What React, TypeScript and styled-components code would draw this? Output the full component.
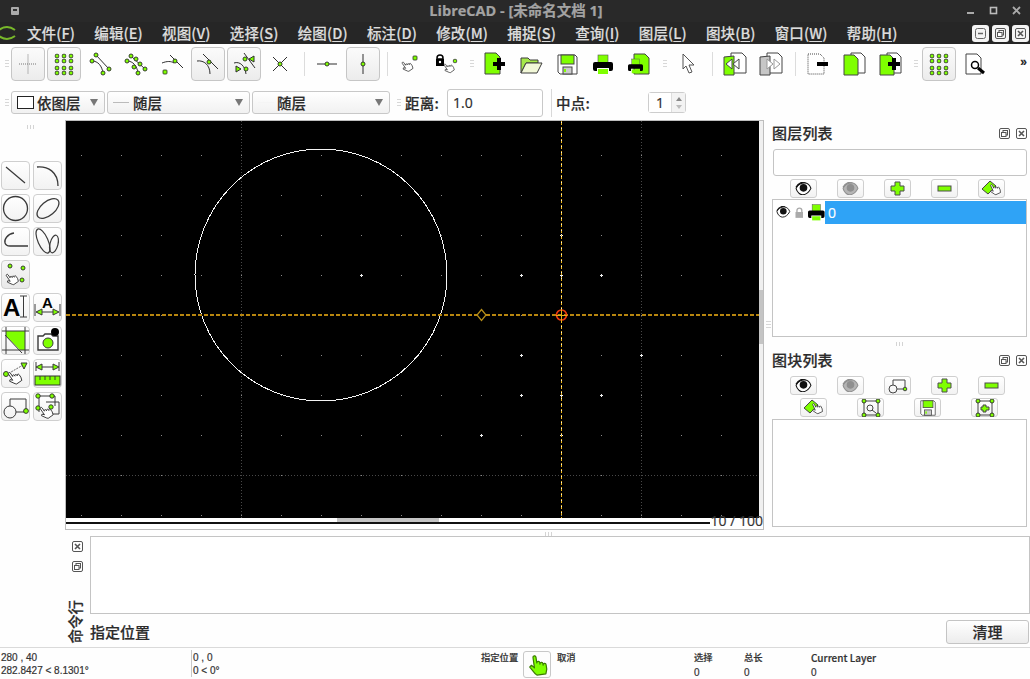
import React from "react";
import styled, { createGlobalStyle } from "styled-components";

const G = "#7fff00";
const D = "#2f2f2f";

const Global = createGlobalStyle`
  html, body { margin: 0; padding: 0; background: #fefefe; }
  body { width: 1030px; height: 679px; overflow: hidden; font-family: "Noto Sans CJK SC", "Open Sans", sans-serif; color: #2b2b2b; -webkit-text-stroke: 0.2px currentColor; }
`;

const Window = styled.div`
  width: 1030px; height: 679px; display: flex; flex-direction: column; background: #fefefe; overflow: hidden;
`;
const TitleBar = styled.div`
  height: 22px; flex: none; background: #292929; display: flex; align-items: center; justify-content: space-between; padding: 0 6px 0 10px;
`;
const TitleText = styled.div`
  font: 700 14.5px "Open Sans", "Noto Sans CJK SC", sans-serif; color: #a3a3a3; line-height: 20px; margin-left: 48px;
`;
const WinCtrls = styled.div`display: flex; gap: 9px;`;
const MenuBar = styled.div`
  height: 22px; flex: none; background: #262626; display: flex; align-items: center; padding-right: 1px;
`;
const MenuItems = styled.div`display: flex; gap: 19.25px; margin-left: 11px; flex: 1;`;
const MenuItem = styled.span`
  font: 500 14.5px/20px "Noto Sans CJK SC", sans-serif; color: #dcdcdc; letter-spacing: 0.1px;
  u { text-underline-offset: 2px; text-decoration-thickness: 1px; }
`;
const MdiBtn = styled.div`
  width: 17px; height: 17px; margin-left: 3px; background: #f4f4f4; border-radius: 3px; display: flex; align-items: center; justify-content: center;
`;

const ToolRow = styled.div`
  height: 40px; flex: none; padding: 3px 0 0 3px; box-sizing: border-box; display: flex; align-items: flex-start; background: #fefefe;
`;
const GripV = styled.div<{ $w?: number }>`
  flex: none; width: ${(p) => p.$w ?? 13}px; height: 34px; display: flex; justify-content: center; align-items: center;
  &::after { content: ""; width: 4px; height: 8px; background: repeating-linear-gradient(#d8d8d8 0 1px, transparent 1px 3px); }
`;
const Btn = styled.div<{ $on?: boolean }>`
  flex: none; width: 34px; height: 34px; margin-right: 2px; box-sizing: border-box; border-radius: 4px; display: flex; align-items: center; justify-content: center;
  border: 1px solid ${(p) => (p.$on ? "#c6c6c6" : "transparent")};
  background: ${(p) => (p.$on ? "linear-gradient(#fbfbfb, #ececec)" : "transparent")};
`;
const Sep = styled.div`
  flex: none; width: 11px; height: 24px; margin-top: 5px; display: flex; justify-content: center;
  &::after { content: ""; width: 1px; background: #dcdcdc; }
`;
const More = styled.div`
  margin-left: auto; margin-right: 3px; margin-top: 8px; font: 700 12px "Liberation Sans", sans-serif; color: #222;
`;
const PropRow = styled.div`
  height: 37px; flex: none; padding: 0 0 0 3px; box-sizing: border-box; display: flex; align-items: center;
`;
const Combo = styled.div<{ $w: number; $pad: number }>`
  flex: none; width: ${(p) => p.$w}px; height: 23px; box-sizing: border-box; margin-right: 2px; border: 1px solid #c8c8c8; border-radius: 3px;
  background: linear-gradient(#fff, #f1f1f1); display: flex; align-items: center; padding: 0 6px 0 ${(p) => p.$pad}px;
  font: 500 14.5px/20px "Noto Sans CJK SC", sans-serif;
`;
const Swatch = styled.span`width: 15px; height: 11px; border: 1px solid #222; background: #fff; margin-right: 3px; flex: none;`;
const DashMark = styled.span<{ $w: number; $c: string; $gap: number }>`
  width: ${(p) => p.$w}px; height: 1px; background: ${(p) => p.$c}; margin-right: ${(p) => p.$gap}px; flex: none;
`;
const Caret = styled.span`
  margin-left: auto; width: 0; height: 0; border-left: 4px solid transparent; border-right: 4px solid transparent; border-top: 7px solid #777;
`;
const PropLabel = styled.span<{ $w: number }>`
  flex: none; width: ${(p) => p.$w}px; font: 500 14.5px/20px "Noto Sans CJK SC", sans-serif; letter-spacing: 0.2px;
`;
const NumInput = styled.div`
  flex: none; width: 96px; height: 28px; box-sizing: border-box; border: 1px solid #c8c8c8; border-radius: 3px; padding-left: 5px;
  font: 500 14px/26px "Open Sans", sans-serif; background: #fff;
`;
const VSep = styled.div`flex: none; width: 1px; height: 28px; background: #d8d8d8; margin: 0 4px 0 8px;`;
const Spin = styled.div`
  flex: none; width: 38px; height: 21px; box-sizing: border-box; border: 1px solid #cdcdcd; border-radius: 3px; margin-left: 0; display: flex;
  font: 500 14px/19px "Open Sans", sans-serif;
`;
const SpinVal = styled.span`flex: 1; text-align: center; background: #fff;`;
const SpinArrows = styled.span`
  width: 13px; display: flex; flex-direction: column; align-items: center; justify-content: center; gap: 4px; background: #f3f3f3; border-left: 1px solid #ddd;
`;
const Tri = styled.span<{ $up?: boolean; $c: string }>`
  width: 0; height: 0; border-left: 3px solid transparent; border-right: 3px solid transparent;
  ${(p) => (p.$up ? `border-bottom: 4px solid ${p.$c};` : `border-top: 4px solid ${p.$c};`)}
`;

const Main = styled.div`flex: none; height: 411px; display: flex; margin-top: -1px;`;
const Palette = styled.div`
  flex: none; width: 65px; box-sizing: border-box; padding: 5px 0 0 1px; display: flex; flex-direction: column; align-items: flex-start;
`;
const GripH = styled.div<{ $m?: string }>`
  width: 8px; height: 4px; margin: ${(p) => p.$m ?? "0"};
  background: repeating-linear-gradient(90deg, #d4d4d4 0 1px, transparent 1px 3px);
`;
const PalGrid = styled.div`
  display: grid; grid-template-columns: 29px 29px; grid-auto-rows: 29px; column-gap: 3px; row-gap: 4px; margin-top: 32px;
`;
const PalBtn = styled.div<{ $active?: boolean }>`
  box-sizing: border-box; border: 1px solid #cfcfcf; border-radius: 4px; display: flex; align-items: center; justify-content: center;
  background: ${(p) => (p.$active ? "linear-gradient(#f7f7f7, #e9e9e9)" : "linear-gradient(#fff, #f2f2f2)")};
`;
const CanvasFrame = styled.div`
  flex: none; width: 699px; height: 410px; box-sizing: border-box; border: 1px solid #bdbdbd; display: grid;
  grid-template-columns: 693px 4px; grid-template-rows: 397px 11px; position: relative;
`;
const VScroll = styled.div`
  background: #f0f0f0; display: flex; flex-direction: column; padding-top: 169px;
`;
const VThumb = styled.div`height: 54px; background: #c4c4c4;`;
const HScroll = styled.div`
  grid-column: 1 / span 2; display: flex; flex-direction: column; background: #fff;
`;
const HTrack = styled.div`
  height: 4px; width: 644px; background: #fff; display: flex; padding-left: 271px; box-sizing: border-box;
`;
const HThumb = styled.div`width: 102px; height: 4px; background: #c4c4c4;`;
const HBlack = styled.div`height: 2px; width: 644px; background: #111;`;
const Counter = styled.div`
  position: absolute; right: 0; bottom: 0; font: 500 14px/16px "Open Sans", sans-serif; color: #333;
`;
const SideGrip = styled.div`
  flex: none; width: 8px; display: flex; align-items: center; padding-left: 2px; box-sizing: border-box; height: 410px; padding-top: 0;
  &::after { content: ""; width: 5px; height: 8px; background: repeating-linear-gradient(#d8d8d8 0 1px, transparent 1px 3px); }
`;
const Side = styled.div`flex: none; width: 258px; display: flex; flex-direction: column;`;
const DockHead = styled.div<{ $h: number }>`
  display: flex; align-items: center; height: ${(p) => p.$h}px; padding-right: 3px; flex: none;
`;
const DockTitle = styled.span`flex: 1; font: 500 15px/20px "Noto Sans CJK SC", sans-serif; letter-spacing: 0.2px;`;
const DockIcons = styled.div`display: flex; gap: 6px;`;
const Filter = styled.div`
  width: 254px; height: 27px; box-sizing: border-box; margin: 3px 0 0 1px; border: 1px solid #c4c4c4; border-radius: 3px; background: #fff; flex: none;
`;
const BtnRow = styled.div<{ $gap: number; $pad: number; $top: number }>`
  display: flex; flex: none; gap: ${(p) => p.$gap}px; padding-left: ${(p) => p.$pad}px; margin-top: ${(p) => p.$top}px;
`;
const SmallBtn = styled.div`
  flex: none; width: 27px; height: 19px; box-sizing: border-box; border: 1px solid #cfcfcf; border-radius: 3px; display: flex; align-items: center; justify-content: center;
  background: linear-gradient(#fff, #f2f2f2);
`;
const LayerList = styled.div`
  width: 255px; height: 138px; flex: none; margin-top: 1px; box-sizing: border-box; border: 1px solid #c4c4c4; background: #fff;
`;
const LayerRow = styled.div`display: flex; align-items: center; height: 24px;`;
const LayerIcons = styled.div`flex: none; width: 52px; height: 24px; display: flex; align-items: center; gap: 4px; padding-left: 3px; box-sizing: border-box;`;
const LayerName = styled.div`
  flex: 1; height: 23px; background: #2fa3f6; color: #fff; font: 500 14px/23px "Open Sans", sans-serif; padding-left: 3px;
`;
const BlockList = styled.div`width: 255px; height: 108px; flex: none; margin-top: 2px; box-sizing: border-box; border: 1px solid #c4c4c4; background: #fff;`;
const DockGripWrap = styled.div`height: 14px; flex: none; display: flex; justify-content: center; align-items: center; padding-right: 3px;`;

const CmdGrip = styled.div`flex: none; height: 5px; display: flex; justify-content: center; padding-left: 68px; align-items: center;`;
const CmdDock = styled.div`flex: none; height: 111px; display: flex;`;
const CmdSide = styled.div`
  flex: none; width: 90px; box-sizing: border-box; padding: 5px 0 4px 72px; display: flex; flex-direction: column; align-items: flex-start; gap: 9px;
`;
const CmdTitle = styled.div`
  margin-top: auto; margin-left: -6px; writing-mode: vertical-rl; text-orientation: sideways; transform: rotate(180deg); font: 500 14.5px/18px "Noto Sans CJK SC", sans-serif;
`;
const CmdBody = styled.div`flex: 1; display: flex; flex-direction: column;`;
const History = styled.div`height: 78px; box-sizing: border-box; border: 1px solid #c4c4c4; background: #fff;`;
const CmdLine = styled.div`flex: 1; display: flex; align-items: center; justify-content: space-between; padding-right: 1px;`;
const Prompt = styled.span`font: 500 15px/20px "Noto Sans CJK SC", sans-serif; margin-top: 2px;`;
const Clear = styled.div`
  width: 83px; height: 24px; box-sizing: border-box; border: 1px solid #c4c4c4; border-radius: 3px; text-align: center; margin-top: 3px;
  background: linear-gradient(#fff, #ececec); font: 500 15px/22px "Noto Sans CJK SC", sans-serif;
`;

const Status = styled.div`
  flex: none; height: 32px; box-sizing: border-box; border-top: 1px solid #dadada; display: flex;
  font: 400 10px/13px "Liberation Sans", "Noto Sans CJK SC", sans-serif; color: #333; white-space: nowrap;
`;
const StatCol = styled.div<{ $w: number; $pad?: number; $bar?: boolean }>`
  flex: none; width: ${(p) => p.$w}px; box-sizing: border-box; padding: 3px 0 0 ${(p) => p.$pad ?? 0}px;
  display: flex; flex-direction: column;
  ${(p) => (p.$bar ? "border-left: 1px solid #c8c8c8; margin: 2px 0; padding-top: 1px;" : "")}
`;
const StatStrong = styled.span<{ $size?: number }>`
  font: 500 ${(p) => p.$size ?? 9.3}px/13px "Noto Sans CJK SC", sans-serif; margin-bottom: 2px;
`;
const MouseBtn = styled.div`
  flex: none; width: 28px; height: 27px; box-sizing: border-box; margin: 3px 6px 0 5px; border: 1px solid #c8c8c8; border-radius: 3px; display: flex; align-items: center; justify-content: center; background: #fdfdfd;
`;

type P = { children?: React.ReactNode; size?: number };
const Svg = ({ children, size = 24 }: P) => (
  <svg width={size} height={size} viewBox={`0 0 ${size} ${size}`} fill="none" stroke={D} strokeWidth={1}>{children}</svg>
);
const N = ({ x, y, r = 2 }: { x: number; y: number; r?: number }) => <circle cx={x} cy={y} r={r} fill={G} stroke="#2a2a2a" strokeWidth={0.9} />;
const Sq = ({ x, y, r = 2 }: { x: number; y: number; r?: number }) => <rect x={x - r} y={y - r} width={r * 2} height={r * 2} rx={0.8} fill={G} stroke="#2a2a2a" strokeWidth={0.8} />;
const Hand = ({ x, y, s = 1, fill = "#fff", rot = -35, line = "#2a2a2a" }: { x: number; y: number; s?: number; fill?: string; rot?: number; line?: string }) => (
  <g transform={`translate(${x} ${y}) scale(${s}) rotate(${rot} 6 7)`}>
    <path d="M4 13 L1 8 L2.3 7 L4 9 V2 a1 1 0 0 1 2 0 V6 a1 1 0 0 1 2 0 V7 a1 1 0 0 1 2 0 V8 a1 1 0 0 1 2 0 V11 L11 14 H5 Z" fill={fill} stroke={line} strokeWidth={0.8} strokeLinejoin="round" />
  </g>
);
const Doc = ({ x, y, w = 15, h = 20, fill = G, dash }: { x: number; y: number; w?: number; h?: number; fill?: string; dash?: boolean }) => (
  <path d={`M${x} ${y}h${w - 4}l4 4v${h - 4}h${-w}z`} fill={fill} stroke="#444" strokeDasharray={dash ? "1 1" : undefined} />
);
const Printer = ({ x, y, s = 1 }: { x: number; y: number; s?: number }) => (
  <g transform={`translate(${x} ${y}) scale(${s})`}>
    <rect x="5" y="0" width="10" height="8" fill={G} stroke="#555" strokeWidth={0.6} />
    <rect x="5" y="14" width="10" height="5" fill={G} stroke="none" />
    <path d="M2 7h16a2 2 0 0 1 2 2v5a2 2 0 0 1-2 2h-2v-3H4v3H2a2 2 0 0 1-2-2V9a2 2 0 0 1 2-2z" fill="#000" stroke="none" />
  </g>
);
const Eye = ({ grey, w = 15 }: { grey?: boolean; w?: number }) => {
  const c = grey ? "#8f8f8f" : "#111";
  return (
    <svg width={w} height={(w * 13) / 16} viewBox="0 0 16 13" fill="none">
      <path d="M1 6C3 2 6 1 9 1c3 0 5 2 6 5-2 4-5 6-8 6C5 12 2 10 1 6z" fill={grey ? "#b5b5b5" : "#fff"} stroke={c} />
      <circle cx="8" cy="5.5" r="3.6" fill={c} />
      <path d="M1 5C3 1 7 0 10 0" stroke={c} strokeWidth="1.4" />
    </svg>
  );
};
const Plus = () => (
  <svg width="15" height="15" viewBox="0 0 15 15"><path d="M5 1h5v4h4v5h-4v4H5v-4H1V5h4z" fill={G} stroke="#4c4c4c" /></svg>
);
const Minus = () => (
  <svg width="15" height="7" viewBox="0 0 15 7"><rect x="1" y="1" width="13" height="5" fill={G} stroke="#4c4c4c" /></svg>
);
const Eraser = () => (
  <svg width="22" height="17" viewBox="0 0 22 17">
    <path d="M1 9l8-8 6 5-8 8z" fill={G} stroke="#444" />
    <Hand x={8} y={3} s={0.85} rot={-25} />
  </svg>
);
const BlockIco = () => (
  <svg width="22" height="16" viewBox="0 0 22 16" fill="none" stroke="#444">
    <circle cx="6" cy="11" r="4" /><path d="M6 7V2h12v9H10" /><circle cx="18" cy="11" r="1.8" fill={G} />
  </svg>
);
const BlockZoom = ({ plus }: { plus?: boolean }) => (
  <svg width="20" height="18" viewBox="0 0 20 18" fill="none" stroke="#444">
    <rect x="3" y="2" width="14" height="14" />
    {plus ? <path d="M8 6h3v2h3v3h-3v2H8v-2H6V8h2z" fill={G} /> : <circle cx="9" cy="9" r="3" />}
    {!plus && <path d="M11 11l4 3" />}
    <N x={3} y={2} /><N x={17} y={2} /><N x={3} y={16} /><N x={17} y={16} />
  </svg>
);
const Disk = ({ s = 1, x = 0, y = 0 }: { s?: number; x?: number; y?: number }) => (
  <g transform={`translate(${x} ${y}) scale(${s})`}>
    <path d="M1 1h17l2 2v17H3l-2-2z" fill="#fff" stroke="#444" />
    <rect x="4" y="1" width="13" height="9" fill={G} stroke="#444" />
    <rect x="6" y="13" width="9" height="7" fill="#ccc" stroke="#444" />
    <rect x="7" y="15" width="2" height="3" fill={G} stroke="none" />
  </g>
);

const GridIco = () => (
  <Svg>
    {[4, 9, 16, 21].map((y) => [5, 12, 19].map((x) => <Sq key={`${x}-${y}`} x={x} y={y} r={1.7} />))}
  </Svg>
);
const SwapArrows = ({ back, grey }: { back?: boolean; grey?: boolean }) => {
  const f = grey ? "#c6c6c6" : G;
  return (
    <Svg>
      <Doc x={8} y={1} w={15} h={20} fill="#fff" />
      <path d="M1 5l10-1v19H1z" fill={f} stroke="#444" />
      <path d={back ? "M3 12l6-5v10zM10 12l6-5v10z" : "M21 12l-6-5v10zM14 12l-6-5v10z"} fill="#fff" stroke={grey ? "#999" : "#444"} />
    </Svg>
  );
};

const mainTools: ({ k: "grip" | "sep" } | { on?: boolean; i: React.ReactNode })[] = [
  { on: true, i: <Svg><path d="M3 12h18M12 2.5v19" stroke="#777" strokeDasharray="1 1" /></Svg> },
  { on: true, i: <GridIco /> },
  { i: <Svg><path d="M8 3L21 17M4 9c6 0 10 5 11 12" /><N x={8} y={3} /><N x={4} y={9} /><N x={21} y={17} /><N x={15} y={21} /></Svg> },
  { i: <Svg><path d="M7 4L21 17M3 9c6 0 10 5 11 12" /><N x={7} y={4} /><N x={3} y={9} /><N x={12} y={7} /><N x={10} y={15} /><N x={16} y={12} /><N x={21} y={17} /><N x={14} y={21} /></Svg> },
  { i: <Svg><path d="M10 3L23 16M2 11c5-2 9-2 12 0" /><N x={15} y={9} /><Sq x={5} y={20} /></Svg> },
  { on: true, i: <Svg><path d="M7 2L22 17M1 9c7-1 13 4 13 13" /><N x={13} y={10} /></Svg> },
  { on: true, i: <Svg><path d="M12 1L23 16M2 11c6-2 11 3 12 11" /><N x={13} y={7} /><N x={14} y={17} /><path d="M22 4l-5 3 5 3z" fill={G} /><path d="M4 14l5 3-5 3z" fill={G} /></Svg> },
  { i: <Svg><path d="M5 5L19 19M19 5L5 19" /><N x={12} y={12} /></Svg> },
  { k: "sep" },
  { i: <Svg><path d="M2 12h20" /><N x={12} y={12} /></Svg> },
  { on: true, i: <Svg><path d="M12 2v20" /><N x={12} y={12} /></Svg> },
  { k: "sep" },
  { i: <Svg><Hand x={3} y={8} s={0.85} /><Sq x={17} y={6} /></Svg> },
  { i: <Svg><path d="M3 6a3 3 0 0 1 6 0v1H3z" stroke="#000" strokeWidth={1.5} /><rect x="2" y="7" width="8" height="7" fill="#000" stroke="none" /><circle cx="6" cy="10" r="1.2" fill="#fff" stroke="none" /><Hand x={9} y={10} s={0.8} /><Sq x={21} y={9} r={1.6} /></Svg> },
  { k: "grip" },
  { i: <Svg><Doc x={2} y={1} w={15} h={21} /><path d="M14 7h4v4h4v4h-4v4h-4v-4h-4v-4h4z" transform="translate(0 -1)" fill="#000" stroke="none" /></Svg> },
  { i: <Svg><path d="M2 6h7l2 2h8v3H7L2 21z" fill="#a6e84a" stroke="#3c3c3c" /><path d="M7 11h16l-5 10H2z" fill="#f2f8d8" stroke="#3c3c3c" /></Svg> },
  { i: <Svg><Disk x={2} y={2} /></Svg> },
  { i: <Svg><Printer x={2} y={3} /></Svg> },
  { i: <Svg><Doc x={7} y={2} w={15} h={20} /><Printer x={1} y={7} s={0.75} /></Svg> },
  { k: "grip" },
  { i: <Svg><path d="M7 2l11 11h-5l3 7-3 1-3-7-3 3z" fill="#fff" stroke="#555" /></Svg> },
  { k: "sep" },
  { i: <SwapArrows back /> },
  { i: <SwapArrows grey /> },
  { k: "sep" },
  { i: <Svg><Doc x={2} y={2} w={16} h={20} fill="#fff" dash /><rect x="11" y="10" width="11" height="4" fill="#000" stroke="none" /></Svg> },
  { i: <Svg><Doc x={9} y={1} w={14} h={20} fill="#fff" /><Doc x={2} y={3} w={14} h={20} /></Svg> },
  { i: <Svg><Doc x={9} y={1} w={14} h={20} fill="#fff" /><Doc x={2} y={3} w={14} h={20} /><path d="M10 6h4v4h4v4h-4v4h-4v-4H6v-4h4z" transform="translate(4 0)" fill="#000" stroke="none" /></Svg> },
  { k: "grip" },
  { on: true, i: <GridIco /> },
  { i: <Svg><Doc x={3} y={2} w={15} h={20} fill="#fff" /><circle cx="12" cy="13" r="3.5" fill="#fff" stroke="#000" strokeWidth={1.5} /><path d="M15 16l6 5" stroke="#000" strokeWidth={3} /></Svg> },
];

const Ico28 = ({ children }: { children: React.ReactNode }) => (
  <svg width="27" height="27" viewBox="0 0 27 27" fill="none" stroke="#3a3a3a" strokeWidth={1}>{children}</svg>
);
const palette: { i?: React.ReactNode; active?: boolean }[] = [
  { i: <Ico28><path d="M4 5L23 21" strokeWidth={1.2} /></Ico28> },
  { i: <Ico28><path d="M3 5c11-1 21 5 21 19" strokeWidth={1.3} /></Ico28> },
  { i: <Ico28><circle cx="13.5" cy="13.5" r="12" strokeWidth={1.3} /></Ico28> },
  { i: <Ico28><ellipse cx="14" cy="13.5" rx="13" ry="7" transform="rotate(-40 14 13.5)" strokeWidth={1.3} /></Ico28> },
  { i: <Ico28><path d="M12 5C5 6 2 12 3 15c1 3 3 3 5 3h18" strokeWidth={1.3} /></Ico28> },
  { i: <Ico28><ellipse cx="9" cy="13" rx="5" ry="13" transform="rotate(-24 9 13)" strokeWidth={1.2} /><ellipse cx="20" cy="16" rx="4" ry="9" transform="rotate(14 20 16)" strokeWidth={1.2} /></Ico28> },
  { active: true, i: <Ico28><N x={8} y={5} /><N x={21} y={7} /><N x={20} y={19} /><Hand x={3} y={11} s={0.95} /></Ico28> },
  {},
  { i: <Ico28><text x="1" y="22" fontFamily="Liberation Sans" fontWeight="700" fontSize="24" fill="#000" stroke="none">A</text><path d="M18 2h7M21.5 2v21M18 23h7" /></Ico28> },
  { i: <Ico28><text x="8" y="14" fontFamily="Liberation Sans" fontWeight="700" fontSize="15" fill="#000" stroke="none">A</text><path d="M1 10v12M26 10v12M3 18h21" /><path d="M2 18l6-3v6zM25 18l-6-3v6z" fill={G} /></Ico28> },
  { i: <Ico28><path d="M4 4H23V23H18L4 9z" fill={G} stroke="none" /><path d="M0 4h27M4 0v27M23 0v27M0 23h27" /><path d="M3 8l17 18" /></Ico28> },
  { i: <Ico28><path d="M4 9h5l2-2h6l2 2h5v14H4z" fill="#fff" strokeWidth={1.4} /><circle cx="14" cy="16" r="5" fill={G} /><circle cx="21" cy="5" r="4" fill="#000" stroke="none" /></Ico28> },
  { i: <Ico28><path d="M4 15L21 5" strokeDasharray="2 1" stroke="#666" /><path d="M19 3h6l-3 6z" fill={G} /><N x={4} y={14} r={2.5} /><Hand x={5} y={10} s={1.05} /></Ico28> },
  { i: <Ico28><path d="M2 2v9M25 2v9M4 7h19" /><path d="M2 7l6-3v6zM25 7l-6-3v6z" fill={G} /><rect x="1" y="16" width="25" height="9" fill={G} stroke="#333" /><path d="M6 16v4M11 16v4M16 16v4M21 16v4" /></Ico28> },
  { i: <Ico28><circle cx="8" cy="19" r="6" /><path d="M8 13V6h16v13H14" /><N x={24} y={18} r={2.4} /></Ico28> },
  { i: <Ico28><path d="M5 3h16M5 3v16M21 3v10M12 9h13v12H14" /><N x={4} y={3} r={2.2} /><N x={18} y={3} r={2.2} /><N x={4} y={15} r={2.2} /><N x={17} y={14} r={2.2} /><Hand x={5} y={12} s={1} /></Ico28> },
];

const TinyBox = ({ x, restore }: { x?: boolean; restore?: boolean }) => (
  <svg width="11" height="11" viewBox="0 0 11 11" fill="none" stroke="#555">
    <rect x="0.5" y="0.5" width="10" height="10" rx="1.5" />
    {x && <path d="M3 3l5 5M8 3l-5 5" strokeWidth={1.6} />}
    {restore && <><rect x="4" y="2.5" width="4.5" height="4.5" /><rect x="2.5" y="4.5" width="4.5" height="4" fill="#fff" /></>}
  </svg>
);

const dim: [number, number][] = [];
for (let i = 0; i < 17; i++) for (let j = 0; j < 10; j++) dim.push([15 + i * 40, 34 + j * 40]);
const bright: [number, number][] = [[295, 154], [455, 154], [495, 154], [535, 154], [495, 114], [455, 234], [575, 234], [455, 274], [495, 274], [535, 274], [415, 314], [495, 314]];

const CanvasArt = () => (
  <svg width="693" height="397" viewBox="0 0 693 397" style={{ display: "block", background: "#000" }} fill="none" shapeRendering="crispEdges">
    {dim.map(([x, y]) => <rect key={`${x}:${y}`} x={x - 0.5} y={y - 0.5} width="1" height="1" fill="#8a8a8a" />)}
    <path d="M175.5 0V397M575.5 0V397" stroke="#484848" strokeDasharray="1 2" />
    <path d="M0 354.5H693" stroke="#484848" strokeDasharray="1 2" />
    {bright.map(([x, y]) => <path key={`${x}/${y}`} d={`M${x - 1} ${y}h3M${x + 0.5} ${y - 1.5}v3`} stroke="#efefef" transform="translate(0 0.5)" />)}
    <circle cx="255" cy="154" r="126" stroke="#f4f4f4" strokeWidth="1" />
    <path d="M0 194H693" stroke="#b8860f" strokeWidth="2" strokeDasharray="4 2" />
    <path d="M495.5 0V397" stroke="#f3b81a" strokeDasharray="4 2" />
    <path d="M495.5 1V397" stroke="#f6efd8" strokeDasharray="1 5" />
    <path d="M415.5 188.5l4.5 5.5-4.5 5.5-4.5-5.5z" stroke="#b8901a" strokeWidth="1.2" fill="#000" shapeRendering="auto" />
    <circle cx="495.5" cy="194" r="5" stroke="#f03a10" strokeWidth="1.7" shapeRendering="auto" />
    <path d="M495.5 188v12M490 194h11" stroke="#e8b014" />
  </svg>
);

const menu: [string, string][] = [["文件", "F"], ["编辑", "E"], ["视图", "V"], ["选择", "S"], ["绘图", "D"], ["标注", "D"], ["修改", "M"], ["捕捉", "S"], ["查询", "I"], ["图层", "L"], ["图块", "B"], ["窗口", "W"], ["帮助", "H"]];

export default function App() {
  return (
    <Window>
      <Global />
      <TitleBar>
        <svg width="10" height="10" viewBox="0 0 10 10"><rect x="1" y="1" width="8" height="8" rx="1" fill="#aaa" /><rect x="3" y="3" width="4" height="2" fill="#333" /></svg>
        <TitleText>LibreCAD - [未命名文档 1]</TitleText>
        <WinCtrls>
          <svg width="14" height="10" viewBox="0 0 14 10"><rect x="3" y="6" width="7" height="2" fill="#aaa" /></svg>
          <svg width="14" height="10" viewBox="0 0 14 10"><rect x="3.5" y="1.5" width="6" height="6" fill="none" stroke="#bbb" strokeWidth="1.6" /></svg>
          <svg width="14" height="10" viewBox="0 0 14 10"><path d="M3 1l7 7M10 1L3 8" stroke="#aaa" strokeWidth="1.8" /></svg>
        </WinCtrls>
      </TitleBar>
      <MenuBar>
        <svg width="16" height="20" viewBox="0 0 16 20" fill="none" stroke="#78b82a" strokeWidth="2"><path d="M-1 7Q7 1 15 7M-1 13Q7 19 15 13" /></svg>
        <MenuItems>
          {menu.map(([t, k], i) => <MenuItem key={i}>{t}(<u>{k}</u>)</MenuItem>)}
        </MenuItems>
        <MdiBtn><svg width="11" height="11" viewBox="0 0 11 11" fill="none" stroke="#666"><rect x="0.5" y="0.5" width="10" height="10" rx="2" /><path d="M3 5.5h5" strokeWidth="1.5" /></svg></MdiBtn>
        <MdiBtn><TinyBox restore /></MdiBtn>
        <MdiBtn><TinyBox x /></MdiBtn>
      </MenuBar>
      <ToolRow>
        <GripV $w={8} />
        {mainTools.map((t, i) => {
          if ("k" in t) return t.k === "sep" ? <Sep key={i} /> : <GripV key={i} />;
          return <Btn key={i} $on={t.on}>{t.i}</Btn>;
        })}
        <More>»</More>
      </ToolRow>
      <PropRow>
        <GripV $w={8} />
        <Combo $w={94} $pad={5}><Swatch />依图层<Caret /></Combo>
        <Combo $w={143} $pad={5}><DashMark $w={16} $c="#bbb" $gap={4} />随层<Caret /></Combo>
        <Combo $w={138} $pad={5}><DashMark $w={16} $c="#f5f5f5" $gap={3} />随层<Caret /></Combo>
        <GripV $w={13} />
        <PropLabel $w={42}>距离:</PropLabel>
        <NumInput>1.0</NumInput>
        <VSep />
        <PropLabel $w={92}>中点:</PropLabel>
        <Spin><SpinVal>1</SpinVal><SpinArrows><Tri $up $c="#888" /><Tri $c="#bbb" /></SpinArrows></Spin>
      </PropRow>
      <Main>
        <Palette>
          <GripH $m="0 0 0 26px" />
          <PalGrid>
            {palette.map((p, i) => (p.i ? <PalBtn key={i} $active={p.active}>{p.i}</PalBtn> : <div key={i} />))}
          </PalGrid>
        </Palette>
        <CanvasFrame>
          <CanvasArt />
          <VScroll><VThumb /></VScroll>
          <HScroll>
            <HTrack><HThumb /></HTrack>
            <HBlack />
          </HScroll>
          <Counter>10 / 100</Counter>
        </CanvasFrame>
        <SideGrip />
        <Side>
          <DockHead $h={26}>
            <DockTitle>图层列表</DockTitle>
            <DockIcons><TinyBox restore /><TinyBox x /></DockIcons>
          </DockHead>
          <Filter />
          <BtnRow $gap={20} $pad={18} $top={3}>
            <SmallBtn><Eye w={17} /></SmallBtn>
            <SmallBtn><Eye grey w={17} /></SmallBtn>
            <SmallBtn><Plus /></SmallBtn>
            <SmallBtn><Minus /></SmallBtn>
            <SmallBtn><Eraser /></SmallBtn>
          </BtnRow>
          <LayerList>
            <LayerRow>
              <LayerIcons>
                <Eye />
                <svg width="9" height="11" viewBox="0 0 9 11"><path d="M2 5V3.5a2.5 2.5 0 0 1 5 0V5" fill="none" stroke="#aaa" strokeWidth="1.4" /><rect x="0.5" y="5" width="8" height="6" fill="#aaa" /></svg>
                <svg width="17" height="17" viewBox="0 0 20 19" style={{ marginLeft: 1 }}><Printer x={0} y={0} /></svg>
              </LayerIcons>
              <LayerName>0</LayerName>
            </LayerRow>
          </LayerList>
          <DockGripWrap><GripH /></DockGripWrap>
          <DockHead $h={18}>
            <DockTitle>图块列表</DockTitle>
            <DockIcons><TinyBox restore /><TinyBox x /></DockIcons>
          </DockHead>
          <BtnRow $gap={20} $pad={18} $top={7}>
            <SmallBtn><Eye w={17} /></SmallBtn>
            <SmallBtn><Eye grey w={17} /></SmallBtn>
            <SmallBtn><BlockIco /></SmallBtn>
            <SmallBtn><Plus /></SmallBtn>
            <SmallBtn><Minus /></SmallBtn>
          </BtnRow>
          <BtnRow $gap={30} $pad={28} $top={3}>
            <SmallBtn><Eraser /></SmallBtn>
            <SmallBtn><BlockZoom /></SmallBtn>
            <SmallBtn><svg width="16" height="16" viewBox="0 0 21 21"><Disk /></svg></SmallBtn>
            <SmallBtn><BlockZoom plus /></SmallBtn>
          </BtnRow>
          <BlockList />
        </Side>
      </Main>
      <CmdGrip><GripH /></CmdGrip>
      <CmdDock>
        <CmdSide>
          <TinyBox x />
          <TinyBox restore />
          <CmdTitle>命令行</CmdTitle>
        </CmdSide>
        <CmdBody>
          <History />
          <CmdLine>
            <Prompt>指定位置</Prompt>
            <Clear>清理</Clear>
          </CmdLine>
        </CmdBody>
      </CmdDock>
      <Status>
        <StatCol $w={191} $pad={1}><span>280 , 40</span><span>282.8427 &lt; 8.1301°</span></StatCol>
        <StatCol $w={290} $pad={1} $bar><span>0 , 0</span><span>0 &lt; 0°</span></StatCol>
        <StatCol $w={37}><StatStrong>指定位置</StatStrong></StatCol>
        <MouseBtn>
          <svg width="22" height="24" viewBox="0 0 22 24"><Hand x={2} y={1} s={1.5} fill={G} rot={-8} line="#3a7a00" /></svg>
        </MouseBtn>
        <StatCol $w={137}><StatStrong>取消</StatStrong></StatCol>
        <StatCol $w={50}><StatStrong>选择</StatStrong><span>0</span></StatCol>
        <StatCol $w={67}><StatStrong>总长</StatStrong><span>0</span></StatCol>
        <StatCol $w={100}><StatStrong $size={10}>Current Layer</StatStrong><span>0</span></StatCol>
      </Status>
    </Window>
  );
}
